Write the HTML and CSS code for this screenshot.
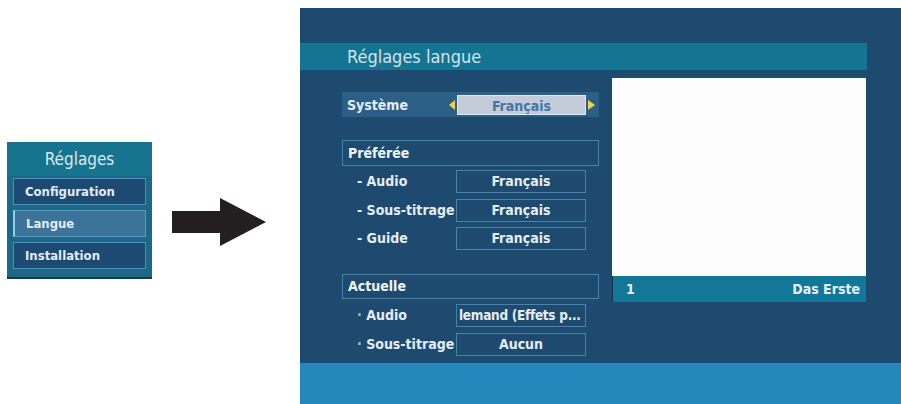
FILE: index.html
```html
<!DOCTYPE html>
<html lang="fr">
<head>
  <meta charset="UTF-8" />
  <meta name="viewport" content="width=device-width, initial-scale=1.0"/>
  <title>Réglages langue</title>
  <link rel="stylesheet" href="styles.css">
</head>
<body>
  <div class="side">
    <div class="menu">
      <div class="menu-title">Réglages</div>
      <div class="menu-item">Configuration</div>
      <div class="menu-item active">Langue</div>
      <div class="menu-item">Installation</div>
    </div>
    <svg class="arrow" width="94" height="48" viewBox="0 0 94 48">
      <polygon points="0,13 48,13 48,0 94,24 48,48 48,35 0,35" fill="#231f20"/>
    </svg>
  </div>

  <div class="screen">
    <div class="screen-top"></div>
    <div class="title-bar">Réglages langue</div>

    <div class="screen-body">
      <div class="settings">
        <div class="system-row">
          <span class="system-label">Système</span>
          <span class="tri tri-left"></span>
          <span class="system-value">Français</span>
          <span class="tri tri-right"></span>
        </div>

        <div class="group">
          <div class="group-head">Préférée</div>
          <div class="row">
            <span class="row-label">- Audio</span>
            <span class="row-value">Français</span>
          </div>
          <div class="row">
            <span class="row-label">- Sous-titrage</span>
            <span class="row-value">Français</span>
          </div>
          <div class="row">
            <span class="row-label">- Guide</span>
            <span class="row-value">Français</span>
          </div>
        </div>

        <div class="group group-current">
          <div class="group-head">Actuelle</div>
          <div class="row">
            <span class="row-label"><span class="dot">·</span> Audio</span>
            <span class="row-value left">lemand (Effets p...</span>
          </div>
          <div class="row">
            <span class="row-label"><span class="dot">·</span> Sous-titrage</span>
            <span class="row-value">Aucun</span>
          </div>
        </div>
      </div>

      <div class="preview">
        <div class="picture"></div>
        <div class="channel-bar">
          <span>1</span>
          <span>Das Erste</span>
        </div>
      </div>
    </div>

    <div class="screen-bottom"></div>
  </div>
</body>
</html>
```

FILE: styles.css
```css
body {
  margin: 0;
  padding: 0;
  display: flex;
  height: 404px;
  overflow: hidden;
  background-color: #fff;
  font-family: "DejaVu Sans Condensed", "DejaVu Sans", sans-serif;
  color: #e6edf3;
}

/* left side: small menu + arrow */
.side {
  width: 300px;
  display: flex;
  align-items: flex-start;
}

.menu {
  margin-top: 142px;
  margin-left: 7px;
  width: 145px;
  height: 135px;
  box-sizing: border-box;
  padding: 0 6px 0 6px;
  background-color: #1b6888;
  box-shadow: 0 2px 0 #123c55;
}

.menu-title {
  height: 34px;
  line-height: 34px;
  text-align: center;
  font-size: 17px;
  color: #dce8f0;
  background-color: #17748f;
  margin: 0 -6px 2px -6px;
}

.menu-item {
  height: 27px;
  line-height: 25px;
  margin-bottom: 5px;
  padding-left: 11px;
  box-sizing: border-box;
  border: 1px solid #4d8fb6;
  background-color: #1d4a72;
  font-size: 13px;
  font-weight: bold;
  color: #e4ecf2;
}

.menu-item.active {
  background-color: #3b7399;
  border-color: #5d9cc0;
  border-left: 2px solid #9cc8e0;
}

.arrow {
  margin-top: 198px;
  margin-left: 20px;
}

/* TV screen */
.screen {
  margin-top: 8px;
  width: 601px;
  height: 396px;
  display: flex;
  flex-direction: column;
  background-color: #1d4a6e;
}

.screen-top {
  height: 35px;
}

.title-bar {
  width: 567px;
  height: 27px;
  line-height: 27px;
  box-sizing: border-box;
  padding-left: 47px;
  background-color: #147592;
  font-size: 18px;
  color: #d6e3ec;
}

.screen-body {
  flex: 1;
  display: flex;
  align-items: flex-start;
  padding-left: 42px;
  padding-top: 8px;
}

.settings {
  width: 257px;
  margin-top: 14px;
  font-size: 14px;
  font-weight: bold;
}

.system-row {
  height: 25px;
  display: flex;
  align-items: center;
  background-color: #2b5f86;
  padding-left: 5px;
  margin-bottom: 23px;
}

.system-label {
  width: 102px;
}

.system-value {
  width: 129px;
  height: 20px;
  line-height: 20px;
  box-sizing: border-box;
  margin: 0 2px;
  text-align: center;
  background-color: #c3ccd8;
  border: 1px solid #e2e8ee;
  color: #4577a6;
}

.tri {
  width: 0;
  height: 0;
  border-top: 5px solid transparent;
  border-bottom: 5px solid transparent;
}

.tri-left {
  border-right: 6px solid #f2d24a;
}

.tri-right {
  border-left: 7px solid #f2d24a;
}

.group {
  display: flex;
  flex-direction: column;
  gap: 5.5px;
}

.group-current {
  margin-top: 24px;
}

.group-head {
  height: 26px;
  line-height: 24px;
  box-sizing: border-box;
  padding-left: 5px;
  margin-bottom: -1.5px;
  border: 1px solid #4683ad;
  color: #f2f5f8;
}

.group-current .group-head {
  height: 25px;
  line-height: 23px;
  margin-bottom: -0.5px;
}

.row {
  display: flex;
  height: 23px;
}

.row-label {
  width: 114px;
  padding-left: 15px;
  box-sizing: border-box;
  line-height: 23px;
  white-space: nowrap;
}

.dot {
  color: #9fcf9a;
}

.row-value {
  width: 130px;
  box-sizing: border-box;
  border: 1px solid #4683ad;
  line-height: 21px;
  text-align: center;
  white-space: nowrap;
  overflow: hidden;
}

.row-value.left {
  text-align: left;
  padding-left: 2px;
  font-size: 13.5px;
  letter-spacing: -0.3px;
}

.preview {
  margin-left: 13px;
  width: 254px;
}

.picture {
  height: 198px;
  background-color: #fdfdfd;
}

.channel-bar {
  height: 26px;
  display: flex;
  justify-content: space-between;
  align-items: center;
  padding: 0 6px 0 13px;
  background-color: #137797;
  border-left: 1px solid #0d3550;
  font-size: 14px;
  font-weight: bold;
  color: #e8eff4;
}

.screen-bottom {
  height: 41px;
  background-color: #2587bb;
}
```
